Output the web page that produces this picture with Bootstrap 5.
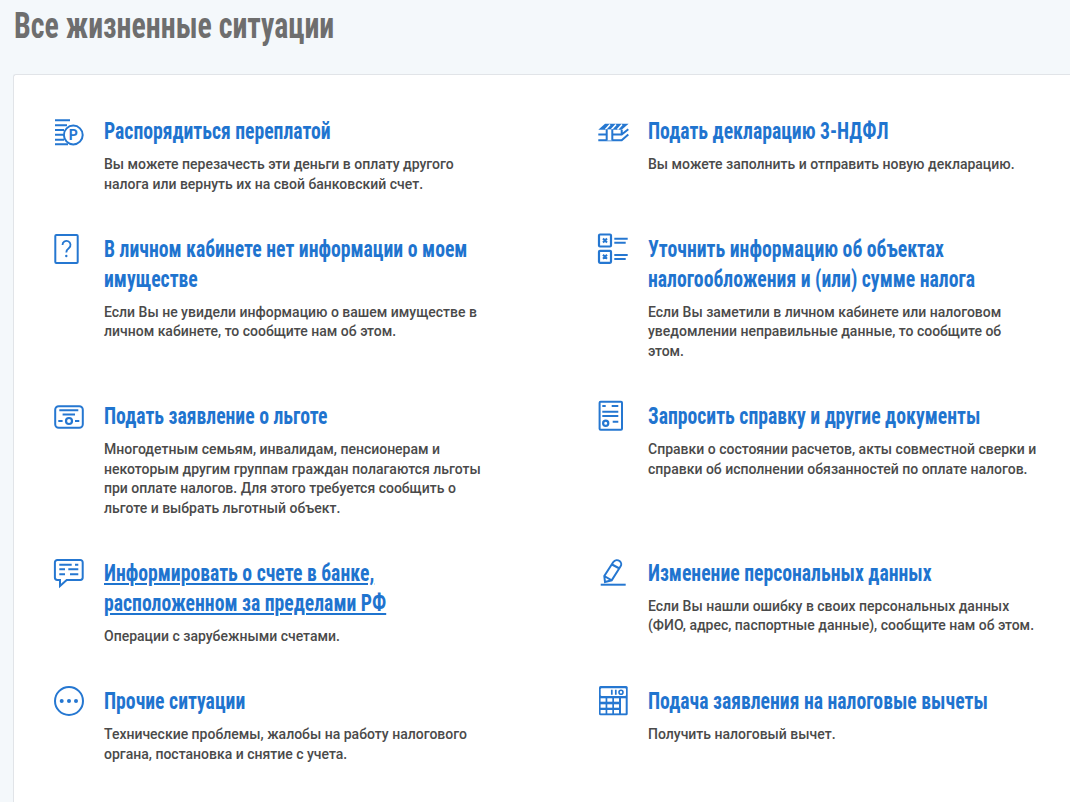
<!DOCTYPE html>
<html lang="ru">

<head>
  <meta charset="UTF-8">
  <meta name="viewport" content="width=device-width, initial-scale=1.0">
  <title>Все жизненные ситуации</title>
  <link href="https://cdn.jsdelivr.net/npm/bootstrap@5.3.2/dist/css/bootstrap.min.css" rel="stylesheet">

  <style>
    body {
      font-family: Roboto, "Liberation Sans", sans-serif;
      background-color: #f4f8fb;
    }

    /* the picture's heading font is narrower than condensed Roboto, so squeeze a bit more */
    .page-title {
      font-family: Roboto, "Liberation Sans", sans-serif;
      font-stretch: condensed;
      font-size: 36px;
      font-weight: 700;
      line-height: 36px;
      color: #6e6e6e;
      padding: 8px 0 0 14px;
      margin: 0 0 30px;
      white-space: nowrap;
      transform: scaleX(.83);
      transform-origin: 14px 0;
    }

    .situations {
      margin-left: 13px;
      padding: 42px 0 38px 40px;
      border-color: #e1e4e8;
      border-right: 0;
      border-bottom: 0;
      border-radius: 3px 0 0 0;
    }

    .situations-grid {
      grid-template-columns: 544px 1fr;
      row-gap: 40.5px;
    }

    .situation-icon {
      flex: 0 0 50px;
      width: 50px;
    }

    .situation-icon svg {
      display: block;
      overflow: visible;
      fill: none;
      stroke: #2577d1;
      stroke-width: 2;
    }

    .situation-icon .solid {
      fill: #2577d1;
      stroke: none;
    }

    .situation-icon .blank {
      fill: #fff;
      stroke: none;
    }

    .situation-title {
      font-family: Roboto, "Liberation Sans", sans-serif;
      font-stretch: condensed;
      font-size: 24px;
      font-weight: 700;
      line-height: 30px;
      color: #1f74cf;
      text-decoration: none;
      display: block;
      max-width: 476px;
      margin-bottom: 8px;
      transform: translateY(-1px) scaleX(.82);
      transform-origin: 0 0;
    }

    .situation-title.active {
      text-decoration: underline;
    }

    .situation-text {
      font-size: 14px;
      font-weight: 500;
      line-height: 19.6px;
      color: #4a4a4a;
      max-width: 390px;
      margin: 0;
    }
  </style>
</head>

<body>
  <h1 class="page-title">Все жизненные ситуации</h1>

  <div class="card situations">
    <div class="d-grid situations-grid">

      <!-- ряд 1 -->
      <div class="d-flex">
        <div class="situation-icon">
          <svg width="32" height="32" viewBox="0 0 32 32">
            <path d="M1 3.3H16M1 8.3H13M1 13H10M1 17.7H9M1 22.7H10M1 27.3H14" />
            <circle cx="19.3" cy="18" r="9.4" />
            <text class="solid" x="19.3" y="22.8" text-anchor="middle" font-size="14" font-weight="700" font-family="Roboto, sans-serif">Р</text>
          </svg>
        </div>
        <div>
          <a class="situation-title" href="#">Распорядиться переплатой</a>
          <p class="situation-text">Вы можете перезачесть эти деньги в оплату другого налога или вернуть их на свой банковский счет.</p>
        </div>
      </div>
      <div class="d-flex">
        <div class="situation-icon">
          <svg width="32" height="32" viewBox="0 0 32 32">
            <path class="solid" d="M.3 12.8L7 6.8H30.6L23.7 12.8Z" />
            <path d="M7.5 12.5L12 7.5M13.5 12.5L18 7.5M19.5 12.5L24 7.5" stroke="#fff" stroke-width="1.6" />
            <path d="M.3 17.5H23.7L30.3 12.3M.3 23.3H23.7L30.3 17.5M23.7 12.8V17.5" />
            <rect class="blank" x="8.7" y="12.5" width="5.6" height="11" />
            <path d="M8.7 12.3V23.5M14.3 12.3V23.5" />
          </svg>
        </div>
        <div>
          <a class="situation-title" href="#">Подать декларацию 3-НДФЛ</a>
          <p class="situation-text">Вы можете заполнить и отправить новую декларацию.</p>
        </div>
      </div>

      <!-- ряд 2 -->
      <div class="d-flex">
        <div class="situation-icon">
          <svg width="32" height="32" viewBox="0 0 32 32">
            <rect x="1.3" y="0" width="22.4" height="28" rx="1" />
            <path d="M8.5 10a4 4 0 1 1 6.5 3c-1.8 1.4-2.7 2.3-2.7 4.5" stroke-width="1.8" />
            <circle class="solid" cx="12.3" cy="21" r="1.2" />
          </svg>
        </div>
        <div>
          <a class="situation-title" href="#">В личном кабинете нет информации о моем имуществе</a>
          <p class="situation-text">Если Вы не увидели информацию о вашем имуществе в личном кабинете, то сообщите нам об этом.</p>
        </div>
      </div>
      <div class="d-flex">
        <div class="situation-icon">
          <svg width="32" height="32" viewBox="0 0 32 32">
            <rect x="1" y="-.5" width="12" height="12" rx="1" stroke-width="2.2" />
            <rect x="1" y="15.8" width="12" height="12" rx="1" stroke-width="2.2" />
            <path d="M5 3.5L9 7.5M9 3.5L5 7.5M5 19.8L9 23.8M9 19.8L5 23.8" />
            <path d="M16.3 3.7H29.7M16.3 7.7H27.7M16.3 20H29.7M16.3 24H27.7" />
          </svg>
        </div>
        <div>
          <a class="situation-title" href="#">Уточнить информацию об объектах налогообложения и (или) сумме налога</a>
          <p class="situation-text">Если Вы заметили в личном кабинете или налоговом уведомлении неправильные данные, то сообщите об этом.</p>
        </div>
      </div>

      <!-- ряд 3 -->
      <div class="d-flex">
        <div class="situation-icon">
          <svg width="32" height="32" viewBox="0 0 32 32">
            <rect x="1.2" y="4.2" width="27.6" height="21.6" rx="3.5" />
            <path d="M5.3 8.3H24.3M8.6 12.5H21M4.3 19H8.6M21 19H25.3" />
            <circle cx="15" cy="19" r="3" stroke-width="2.2" />
          </svg>
        </div>
        <div>
          <a class="situation-title" href="#">Подать заявление о льготе</a>
          <p class="situation-text">Многодетным семьям, инвалидам, пенсионерам и некоторым другим группам граждан полагаются льготы при оплате налогов. Для этого требуется сообщить о льготе и выбрать льготный объект.</p>
        </div>
      </div>
      <div class="d-flex">
        <div class="situation-icon">
          <svg width="32" height="32" viewBox="0 0 32 32">
            <rect x="1.6" y="-.2" width="22.4" height="28" rx="1" />
            <path d="M4.3 4H7.7M13.7 4H20.3M4.3 9.7H20.3M4.3 14H20.3M14.7 19.7H20.3" />
            <circle cx="7.7" cy="21.3" r="2.6" stroke-width="2.2" />
          </svg>
        </div>
        <div>
          <a class="situation-title" href="#">Запросить справку и другие документы</a>
          <p class="situation-text">Справки о состоянии расчетов, акты совместной сверки и справки об исполнении обязанностей по оплате налогов.</p>
        </div>
      </div>

      <!-- ряд 4 -->
      <div class="d-flex">
        <div class="situation-icon">
          <svg width="32" height="32" viewBox="0 0 32 32">
            <path d="M3.3 1H26.3A2.4 2.4 0 0 1 28.7 3.4V18.6A2.4 2.4 0 0 1 26.3 21H12.7L6 27V21H3.3A2.4 2.4 0 0 1 .9 18.6V3.4A2.4 2.4 0 0 1 3.3 1Z" />
            <path d="M5.3 5.7H17.7M21 5.7H24.3M5.3 10.3H11M14.3 10.3H24.3M5.3 15.3H11M16 15.3H24.3" />
          </svg>
        </div>
        <div>
          <a class="situation-title active" href="#">Информировать о счете в банке, расположенном за пределами РФ</a>
          <p class="situation-text">Операции с зарубежными счетами.</p>
        </div>
      </div>
      <div class="d-flex">
        <div class="situation-icon">
          <svg width="32" height="32" viewBox="0 0 32 32">
            <path d="M7 23L6.3 17L15.3 3C17 .8 19.8 .8 21.6 2C23.4 3.4 23.6 5.8 22.6 7.3L13.7 21.3L7 23ZM6.3 17L13.7 21.3M14 5.5L21.5 9.5" />
            <path d="M2.7 25.7H27.7" />
          </svg>
        </div>
        <div>
          <a class="situation-title" href="#">Изменение персональных данных</a>
          <p class="situation-text">Если Вы нашли ошибку в своих персональных данных (ФИО, адрес, паспортные данные), сообщите нам об этом.</p>
        </div>
      </div>

      <!-- ряд 5 -->
      <div class="d-flex">
        <div class="situation-icon">
          <svg width="32" height="32" viewBox="0 0 32 32">
            <circle cx="15" cy="14" r="14" />
            <circle class="solid" cx="7.7" cy="14" r="2" />
            <circle class="solid" cx="15" cy="14" r="2" />
            <circle class="solid" cx="22" cy="14" r="2" />
          </svg>
        </div>
        <div>
          <a class="situation-title" href="#">Прочие ситуации</a>
          <p class="situation-text">Технические проблемы, жалобы на работу налогового органа, постановка и снятие с учета.</p>
        </div>
      </div>
      <div class="d-flex">
        <div class="situation-icon">
          <svg width="32" height="32" viewBox="0 0 32 32">
            <rect class="solid" x="1" y="-1" width="28.7" height="29.3" rx="1.5" />
            <rect class="blank" x="2.7" y="1.3" width="25.3" height="7.7" rx="1" />
            <g class="blank">
              <rect x="2.6" y="11.3" width="5" height="3.4" />
              <rect x="9.3" y="11.3" width="5" height="3.4" />
              <rect x="16" y="11.3" width="5" height="3.4" />
              <rect x="2.6" y="17.3" width="5" height="3.4" />
              <rect x="9.3" y="17.3" width="5" height="3.4" />
              <rect x="16" y="17.3" width="5" height="3.4" />
              <rect x="2.6" y="23" width="5" height="3.4" />
              <rect x="9.3" y="23" width="5" height="3.4" />
              <rect x="16" y="23" width="5" height="3.4" />
              <rect x="23" y="11.3" width="4.7" height="15.1" />
            </g>
            <path d="M13.8 2.7V7.7M17.8 2.7V7.7" stroke-width="1.7" />
            <circle cx="23" cy="5.2" r="2" stroke-width="1.6" />
          </svg>
        </div>
        <div>
          <a class="situation-title" href="#">Подача заявления на налоговые вычеты</a>
          <p class="situation-text">Получить налоговый вычет.</p>
        </div>
      </div>

    </div>
  </div>

  <script src="https://cdn.jsdelivr.net/npm/bootstrap@5.3.2/dist/js/bootstrap.bundle.min.js"></script>
</body>

</html>
